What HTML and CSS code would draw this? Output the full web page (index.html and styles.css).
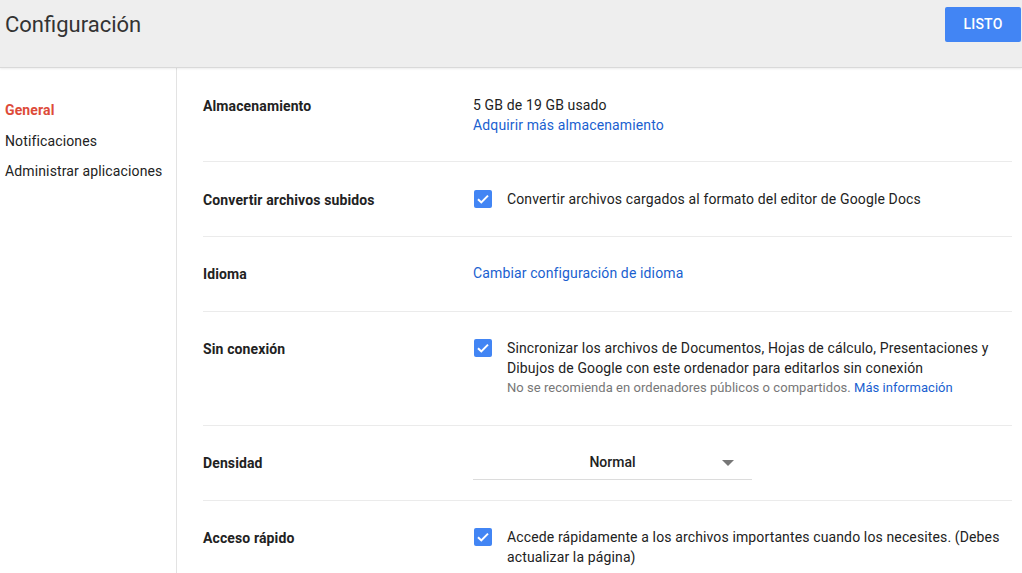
FILE: index.html
```html
<!DOCTYPE html>
<html lang="es">
<head>
<meta charset="utf-8">
<title>Configuración</title>
<link rel="stylesheet" href="styles.css">
</head>
<body>
<header class="topbar">
  <h1 class="title">Configuración</h1>
  <button class="done">LISTO</button>
</header>
<div class="main">
  <nav class="sidebar">
    <a class="nav-item active">General</a>
    <a class="nav-item">Notificaciones</a>
    <a class="nav-item">Administrar aplicaciones</a>
  </nav>
  <section class="content">
    <div class="row first">
      <div class="label">Almacenamiento</div>
      <div class="value">
        <div>5 GB de 19 GB usado</div>
        <a class="link">Adquirir más almacenamiento</a>
      </div>
    </div>
    <div class="row second">
      <div class="label">Convertir archivos subidos</div>
      <div class="value check-line">
        <span class="checkbox"><svg viewBox="0 0 18 18" width="18" height="18"><path d="M4 9.2l3.3 3.2L14 5.6" fill="none" stroke="#fff" stroke-width="2"/></svg></span>
        <div>Convertir archivos cargados al formato del editor de Google Docs</div>
      </div>
    </div>
    <div class="row third">
      <div class="label">Idioma</div>
      <div class="value"><a class="link">Cambiar configuración de idioma</a></div>
    </div>
    <div class="row">
      <div class="label">Sin conexión</div>
      <div class="value check-line">
        <span class="checkbox"><svg viewBox="0 0 18 18" width="18" height="18"><path d="M4 9.2l3.3 3.2L14 5.6" fill="none" stroke="#fff" stroke-width="2"/></svg></span>
        <div>
          <div>Sincronizar los archivos de Documentos, Hojas de cálculo, Presentaciones y Dibujos de Google con este ordenador para editarlos sin conexión</div>
          <div class="hint">No se recomienda en ordenadores públicos o compartidos. <a class="link">Más información</a></div>
        </div>
      </div>
    </div>
    <div class="row density">
      <div class="label">Densidad</div>
      <div class="value">
        <div class="select">
          <span class="select-text">Normal</span>
          <span class="arrow"></span>
        </div>
      </div>
    </div>
    <div class="row">
      <div class="label">Acceso rápido</div>
      <div class="value check-line">
        <span class="checkbox"><svg viewBox="0 0 18 18" width="18" height="18"><path d="M4 9.2l3.3 3.2L14 5.6" fill="none" stroke="#fff" stroke-width="2"/></svg></span>
        <div>Accede rápidamente a los archivos importantes cuando los necesites. (Debes actualizar la página)</div>
      </div>
    </div>
  </section>
</div>
</body>
</html>
```
FILE: styles.css
```css
html, body {
  margin: 0;
  padding: 0;
  background: #fff;
}
body {
  font-family: Roboto, "Liberation Sans", Arial, sans-serif;
  font-size: 14px;
  line-height: 20px;
  color: #222;
  height: 573px;
  overflow: hidden;
}
.topbar {
  height: 68px;
  background: #eeeeee;
  border-bottom: 1px solid #d9d9d9;
  box-shadow: 0 1px 2px rgba(0,0,0,0.08);
  display: flex;
  align-items: flex-start;
  justify-content: space-between;
  box-sizing: border-box;
  position: relative;
  z-index: 1;
}
.title {
  margin: 11px 0 0 5px;
  font-size: 22px;
  font-weight: 400;
  line-height: 28px;
  color: #333;
}
.done {
  margin: 7px 1px 0 0;
  width: 76px;
  height: 35px;
  background: #4285f4;
  border: none;
  border-radius: 2px;
  color: #fff;
  font-family: Roboto, "Liberation Sans", Arial, sans-serif;
  font-size: 14px;
  font-weight: 500;
  padding: 0 0 2px;
  letter-spacing: 0.2px;
}
.main {
  display: flex;
  height: 505px;
  letter-spacing: 0.13px;
}
.sidebar {
  width: 176px;
  border-right: 1px solid #e3e3e3;
  padding-top: 32px;
  display: flex;
  flex-direction: column;
  gap: 10.5px;
  flex-shrink: 0;
}
.nav-item {
  padding-left: 5px;
  color: #222;
  line-height: 20px;
  display: block;
}
.nav-item.active {
  color: #dd4b39;
  font-weight: 700;
}
.content {
  flex: 1;
  padding: 0 10px 0 26px;
}
.row {
  display: flex;
  padding: 26px 0 28px;
  border-bottom: 1px solid #ebebeb;
}
.row.first {
  padding-top: 27px;
  padding-bottom: 26px;
}
.row.second {
  padding-top: 27px;
  padding-bottom: 26px;
}
.row.third {
  padding-bottom: 27px;
}
.row.density {
  padding-bottom: 20px;
}
.label {
  width: 270px;
  flex-shrink: 0;
  font-weight: 700;
  color: #222;
  padding-top: 1px;
  letter-spacing: 0.12px;
}
.value {
  flex: 1;
}
.link {
  color: #1a5fd0;
  text-decoration: none;
}
.check-line {
  display: flex;
  gap: 15px;
}
.checkbox {
  width: 18px;
  height: 18px;
  margin: 1px 0 0 1px;
  background: #4285f4;
  border-radius: 2px;
  flex-shrink: 0;
  display: block;
}
.checkbox svg {
  display: block;
}
.hint {
  font-size: 13px;
  color: #777;
  line-height: 18px;
  margin-top: 1px;
  letter-spacing: 0.04px;
}
.select {
  width: 279px;
  height: 27px;
  border-bottom: 1px solid #dcdcdc;
  display: flex;
  justify-content: center;
  position: relative;
}
.select-text {
  font-weight: 500;
  color: #222;
  letter-spacing: 0;
}
.arrow {
  position: absolute;
  left: 249px;
  top: 8px;
  width: 0;
  height: 0;
  border-left: 6px solid transparent;
  border-right: 6px solid transparent;
  border-top: 6px solid #777;
}
```
